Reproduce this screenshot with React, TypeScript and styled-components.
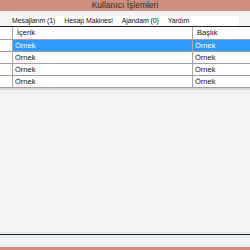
import React from "react";
import styled, { createGlobalStyle } from "styled-components";

const GlobalStyle = createGlobalStyle`
  html, body {
    margin: 0;
    padding: 0;
    background: #f3f2f5;
  }
  body {
    font-family: "Liberation Sans", Arial, sans-serif;
  }
`;

const Window = styled.div`
  width: 250px;
  height: 250px;
  display: flex;
  flex-direction: column;
  background: #f3f2f5;
  overflow: hidden;
`;
const TitleBar = styled.div`
  height: 11px;
  background: #cb8f7b;
  color: #3a2a26;
  font-size: 8.5px;
  line-height: 11px;
  text-align: center;
`;
const MenuBar = styled.div`
  height: 16px;
  padding: 4px 10px 0 10px;
  box-sizing: border-box;
  border-bottom: 1px solid #1e1e1e;
  display: flex;
`;
const MenuStrip = styled.div`
  flex-grow: 1;
  display: flex;
  gap: 9px;
  padding-left: 1px;
  background: #fff;
  border: 1px solid #ececec;
  border-bottom: none;
  font-size: 7px;
  letter-spacing: -0.1px;
  line-height: 10px;
  color: #111;
`;
const MenuItem = styled.div``;
const Grid = styled.div`
  display: grid;
  grid-template-columns: 12px 180px 1fr;
  border-bottom: 2px solid #d6d6d6;
  background: #f3f2f5;
`;
const Cell = styled.div<{ $selected?: boolean; $head?: boolean }>`
  height: ${(p) => (p.$head ? "12px" : "11px")};
  line-height: ${(p) => (p.$head ? "12px" : "11px")};
  font-size: 7.5px;
  padding-left: ${(p) => (p.$head ? "4px" : "2px")};
  background: ${(p) => (p.$selected ? "#3399ff" : "#fff")};
  color: ${(p) => (p.$selected ? "#fff" : "#111")};
  border-left: 1px solid #a7a7a7;
  border-bottom: 1px solid #a0a0a0;
  white-space: nowrap;
  overflow: hidden;
`;
const RowHead = styled.div`
  background: #fff;
  border-bottom: 1px solid #a0a0a0;
`;
const Body = styled.div`
  flex-grow: 1;
`;
const Footer = styled.div`
  display: flex;
  flex-direction: column;
`;
const Line = styled.div<{ $color: string; $h: number; $gap?: number }>`
  height: ${(p) => p.$h}px;
  background: ${(p) => p.$color};
  margin-top: ${(p) => p.$gap ?? 0}px;
`;

const rows = [true, false, false, false];

function App() {
  return (
    <Window>
      <GlobalStyle />
      <TitleBar>Kullanıcı İşlemleri</TitleBar>
      <MenuBar>
        <MenuStrip>
          <MenuItem>Mesajlarım (1)</MenuItem>
          <MenuItem>Hesap Makinesi</MenuItem>
          <MenuItem>Ajandam (0)</MenuItem>
          <MenuItem>Yardım</MenuItem>
        </MenuStrip>
      </MenuBar>
      <Grid>
        <RowHead />
        <Cell $head>İçerik</Cell>
        <Cell $head>Başlık</Cell>
        {rows.map((sel, i) => (
          <React.Fragment key={i}>
            <RowHead />
            <Cell $selected={sel}>Örnek</Cell>
            <Cell $selected={sel}>Örnek</Cell>
          </React.Fragment>
        ))}
      </Grid>
      <Body />
      <Footer>
        <Line $color="#dcecf8" $h={1} />
        <Line $color="#1e1e1e" $h={1} $gap={1} />
        <Line $color="#dcecf8" $h={1} $gap={1} />
        <Line $color="#dcecf8" $h={1} $gap={7} />
        <Line $color="#cb8f7b" $h={3} $gap={2} />
      </Footer>
    </Window>
  );
}

export default App;
